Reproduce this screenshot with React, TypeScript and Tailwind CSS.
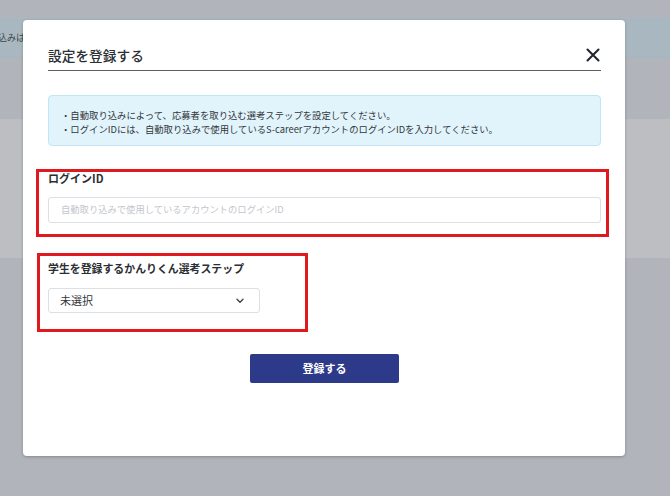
import React from 'react';

const jp = { fontFamily: '"Noto Sans CJK JP", "Noto Sans", sans-serif' };

const CloseIcon = () => (
    <svg width="14" height="14" viewBox="0 0 14 14" className="mr-[1px]">
        <path d="M1.5 1.5L12.5 12.5M12.5 1.5L1.5 12.5" stroke="#23262b" strokeWidth="2.1" strokeLinecap="round" />
    </svg>
);

const Chevron = () => (
    <svg width="8" height="6" viewBox="0 0 8 6">
        <path d="M1 1.2L4 4.2L7 1.2" fill="none" stroke="#3a3d42" strokeWidth="1.3" strokeLinecap="round" strokeLinejoin="round" />
    </svg>
);

export default function App() {
    return (
        <div className="relative h-[496px] w-[670px] overflow-hidden bg-[#b1b4bb]" style={jp}>
            {/* page behind the dialog */}
            <div className="h-[19px]" />
            <div className="flex h-[38px] items-center border-y border-[#9db8c6] bg-[#a9b8c0]">
                <span className="-ml-[2px] whitespace-nowrap text-[9px] text-[#41464c]">込みは行われません</span>
            </div>
            <div className="h-[62px]" />
            <div className="h-[139px] bg-[#bcbec2]" />

            {/* dialog */}
            <div className="absolute inset-0 pl-[23px] pt-[20px]">
                <div className="h-[436px] w-[602px] rounded-[4px] bg-white pl-[25px] pr-[24px] shadow-[0_1px_3px_rgba(0,0,0,0.25)]">
                    <div className="flex items-center justify-between border-b border-[#5c5f65] pt-[25px] pb-[5px]">
                        <h2 className="text-[13.7px] font-medium leading-[20px] text-[#2b2e33]">設定を登録する</h2>
                        <CloseIcon />
                    </div>

                    <div className="mt-[24px] rounded-[4px] border border-[#c0e6f4] bg-[#e1f4fb] pl-[12px] pt-[12px] pb-[9px] text-[9.35px] leading-[14px] text-[#33363b]">
                        <p>・自動取り込みによって、応募者を取り込む選考ステップを設定してください。</p>
                        <p>・ログインIDには、自動取り込みで使用しているS-careerアカウントのログインIDを入力してください。</p>
                    </div>

                    {/* login id */}
                    <div className="-ml-[12px] -mr-[8px] mt-[23px] border-[3px] border-[#e0191e] pl-[9px] pr-[5px] pb-[11px]">
                        <label className="block text-[11px] font-bold leading-[12px] text-[#2b2e33]">ログインID</label>
                        <div className="mt-[13px] flex h-[26px] items-center rounded-[3px] border border-[#dcdfe3] pl-[12px] text-[9.3px] text-[#c3c6cc]">
                            自動取り込みで使用しているアカウントのログインID
                        </div>
                    </div>

                    {/* step select */}
                    <div className="-ml-[11px] mt-[16px] w-[271px] border-[3px] border-[#e0191e] pl-[8px] pt-[6px] pb-[16px]">
                        <label className="block text-[10.9px] font-bold leading-[12px] text-[#2b2e33]">学生を登録するかんりくん選考ステップ</label>
                        <div className="mt-[14px] flex h-[25px] w-[212px] items-center justify-between rounded-[3px] border border-[#dcdfe3] pl-[11px] pr-[15px] text-[11px] text-[#33363b]">
                            <span>未選択</span>
                            <Chevron />
                        </div>
                    </div>

                    <div className="mt-[22px] flex justify-center">
                        <button className="h-[29px] w-[149px] rounded-[2px] bg-[#2d3a8a] text-[11px] font-bold text-white">
                            登録する
                        </button>
                    </div>
                </div>
            </div>
        </div>
    );
}
